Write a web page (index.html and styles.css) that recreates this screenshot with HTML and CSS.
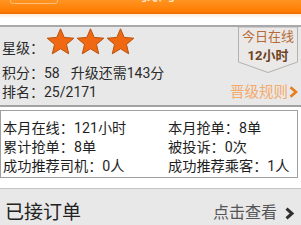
FILE: index.html
```html
<!DOCTYPE html>
<html lang="zh-CN">
<head>
<meta charset="utf-8">
<title>司机中心</title>
<link rel="stylesheet" href="styles.css">
</head>
<body>
<header class="topbar">
  <div class="topbar-inner">
    <span class="back-btn"></span>
    <span class="title">我的</span>
  </div>
</header>
<div class="strip"></div>
<section class="panel">
  <div class="star-row">
    <span class="label">星级<span class="colon">：</span></span>
    <span class="stars">
      <svg class="star" viewBox="0 0 29 27"><path d="M14.5 0.8 L18.2 9.4 L27.8 10.2 L20.5 16.45 L22.7 25.8 L14.5 20.8 L6.3 25.8 L8.5 16.45 L1.2 10.2 L10.8 9.4 Z"/></svg>
      <svg class="star" viewBox="0 0 29 27"><path d="M14.5 0.8 L18.2 9.4 L27.8 10.2 L20.5 16.45 L22.7 25.8 L14.5 20.8 L6.3 25.8 L8.5 16.45 L1.2 10.2 L10.8 9.4 Z"/></svg>
      <svg class="star" viewBox="0 0 29 27"><path d="M14.5 0.8 L18.2 9.4 L27.8 10.2 L20.5 16.45 L22.7 25.8 L14.5 20.8 L6.3 25.8 L8.5 16.45 L1.2 10.2 L10.8 9.4 Z"/></svg>
    </span>
  </div>
  <div class="badge">
    <svg class="badge-shape" viewBox="0 0 60 46" preserveAspectRatio="none"><path d="M0.5 0 L59.5 0 L59.5 35 L30 45.5 L0.5 35 Z"/></svg>
    <span class="badge-top">今日在线</span>
    <span class="badge-hours">12小时</span>
  </div>
  <div class="row score">积分<span class="colon">：</span>58<span class="gap">升级还需143分</span></div>
  <div class="row rank">排名<span class="colon">：</span>25/2171</div>
  <a class="rules">晋级规则<svg class="chev" viewBox="0 0 9 12"><path d="M1.5 1.2 L7 6 L1.5 10.8"/></svg></a>
</section>
<section class="stats">
  <div class="cell">本月在线<span class="colon">：</span>121小时</div>
  <div class="cell">本月抢单<span class="colon">：</span>8单</div>
  <div class="cell">累计抢单<span class="colon">：</span>8单</div>
  <div class="cell">被投诉<span class="colon">：</span>0次</div>
  <div class="cell">成功推荐司机<span class="colon">：</span>0人</div>
  <div class="cell">成功推荐乘客<span class="colon">：</span>1人</div>
</section>
<section class="orders">
  <span class="orders-title">已接订单</span>
  <span class="view">点击查看<svg class="chev dark" viewBox="0 0 9 12"><path d="M1.5 1.2 L7 6 L1.5 10.8"/></svg></span>
</section>
</body>
</html>
```
FILE: styles.css
```css
* { box-sizing: border-box; }
html, body { margin: 0; padding: 0; background: #fff; }
body {
  width: 301px;
  height: 225px;
  overflow: hidden;
  font-family: Roboto, "Noto Sans CJK SC", sans-serif;
  color: #222;
}
.colon { font-family: "Noto Sans CJK TC", "Noto Sans CJK SC", sans-serif; }
.topbar {
  height: 14px;
  overflow: hidden;
  background: linear-gradient(#ff9422, #ff7d02 80%, #e86d00);
}
.topbar-inner {
  display: flex;
  align-items: flex-end;
  height: 26px;
  margin-top: -22px;
  padding-left: 10px;
}
.back-btn {
  width: 48px;
  height: 24px;
  border: 1px solid #ffbd7a;
  border-radius: 3px;
}
.title {
  margin-left: 82px;
  font-size: 18px;
  line-height: 20px;
  color: #ffe6cc;
}
.strip {
  height: 11px;
  background: linear-gradient(#fde9d8, #fff 40%);
}
.panel {
  display: grid;
  grid-template-columns: 1fr 60px;
  grid-template-rows: 35px 19px 19px;
  padding: 1px 3px 4px 2px;
  background: #e8e8e8;
  border-top: 2px solid #a9a9a9;
  border-bottom: 2px solid #a2a2a2;
  font-size: 14px;
  line-height: 19px;
  color: #2a2a2a;
}
.star-row {
  grid-column: 1;
  grid-row: 1;
  display: flex;
  align-items: flex-start;
}
.label { margin-top: 10px; }
.stars {
  display: flex;
  gap: 1px;
  margin-left: 2px;
}
.star {
  width: 29px;
  height: 27px;
}
.star path {
  fill: #f06812;
  stroke: #b8520e;
  stroke-width: 1;
  stroke-linejoin: round;
}
.badge {
  grid-column: 2;
  grid-row: 1 / 3;
  position: relative;
  height: 46px;
  margin-top: -1px;
  display: flex;
  flex-direction: column;
  align-items: center;
  font-size: 13px;
}
.badge-shape {
  position: absolute;
  inset: 0;
  width: 60px;
  height: 46px;
}
.badge-shape path {
  fill: #ebe9e8;
  stroke: #b3b0ae;
  stroke-width: 1;
}
.badge-top {
  position: relative;
  margin-top: 1px;
  line-height: 18px;
  color: #b66a36;
}
.badge-hours {
  position: relative;
  line-height: 20px;
  font-weight: bold;
  color: #6e4222;
}
.row { grid-column: 1; }
.score { grid-row: 2; }
.rank { grid-row: 3; }
.gap { margin-left: 11px; }
.rules {
  grid-column: 1 / 3;
  grid-row: 3;
  justify-self: end;
  display: flex;
  align-items: center;
  color: #f5aa6c;
  font-size: 14.5px;
  line-height: 19px;
  margin-top: 1px;
}
.chev {
  width: 9px;
  height: 12px;
  margin-left: 1px;
}
.chev path {
  fill: none;
  stroke: #e5801f;
  stroke-width: 2.8;
}
.stats {
  display: grid;
  grid-template-columns: 165px 1fr;
  grid-auto-rows: 19px;
  margin: 3px 3px 0 0;
  padding: 7px 0 2px 2px;
  border: 1px solid #a0a0a0;
  font-size: 14.2px;
  line-height: 19px;
  color: #1e1e1e;
}
.cell { white-space: nowrap; }
.orders {
  margin-top: 10px;
  height: 40px;
  padding: 13px 7px 0 5px;
  display: flex;
  justify-content: space-between;
  align-items: flex-start;
  background: #e8e8e8;
  border-top: 1px solid #c4c4c4;
}
.orders-title {
  font-size: 19px;
  line-height: 22px;
  color: #222;
}
.view {
  display: flex;
  align-items: center;
  font-size: 16px;
  line-height: 22px;
  color: #555;
}
.view .chev { margin-left: 8px; width: 9px; height: 13px; }
.chev.dark path { stroke: #2e2e2e; stroke-width: 3; }
```
